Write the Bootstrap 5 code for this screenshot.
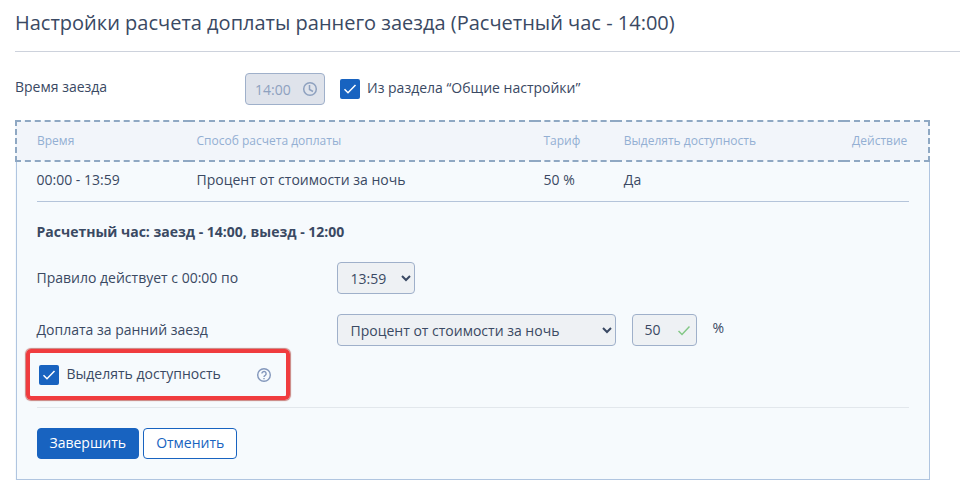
<!DOCTYPE html>
<html lang="ru">
<head>
<meta charset="utf-8">
<meta name="viewport" content="width=device-width, initial-scale=1">
<title>Настройки расчета доплаты</title>
<link href="https://cdn.jsdelivr.net/npm/bootstrap@5.3.0/dist/css/bootstrap.min.css" rel="stylesheet">
<style>
  body { font-family: "Open Sans", "Noto Sans", sans-serif; font-size: 14px; line-height: 20px; color: #3a4963; background: #fff; }
  .page { padding: 9px 7px 12px 15px; }
  .page-title { font-size: 20px; line-height: 28px; font-weight: 400; padding-bottom: 14px; margin-bottom: 21px; border-bottom: 1px solid #cdd2dc; }
  .label-wide { width: 230px; }
  .label-form { width: 300px; }
  .field { height: 32px; border: 1px solid #9fb0ca; border-radius: 4px; background: #eef1f4; color: #3a4963; }
  select.field { padding: 0 0 0 9px; }
  input.field { padding: 0 30px 2px 12px; }
  .field-icon { position: absolute; top: 0; right: 7px; height: 100%; pointer-events: none; }
  .field-time { width: 80px; }
  input.field-time { padding-left: 9px; padding-bottom: 0; }
  .field-time:disabled { background: #dfe3eb; color: #8ea1bf; opacity: 1; }
  .field-hour { width: 78px; }
  .field-method { width: 279px; }
  .field-sum { width: 65px; }
  .tick { appearance: none; width: 20px; height: 20px; margin: 0; border-radius: 2px; background: #1863c0 url("data:image/svg+xml,%3Csvg xmlns='http://www.w3.org/2000/svg' viewBox='0 0 20 20'%3E%3Cpath d='M4.500 10.200l3.500 3.500 7.500-7.700' fill='none' stroke='white' stroke-width='1.500'/%3E%3C/svg%3E") center / 20px; }
  .tick + label { padding-left: 7px; }
  .common { margin-left: 15px; }
  .common + label { padding-bottom: 2px; }
  .rules { border-collapse: collapse; border: 1px solid #b0c5e0; background: #f6fafd; }
  .rules-wrap { margin: 15px 30px 0 0; }
  .rules th { height: 40px; padding: 0 8px; font-size: 12px; font-weight: 400; color: #93afd3; background: #f2f5fa; border: 2px dashed #8fa8c3; border-left: 0; border-right: 0; }
  .rules th:first-child { border-left: 2px dashed #8fa8c3; }
  .rules th:last-child { border-right: 2px dashed #8fa8c3; }
  .rules td { height: 40px; padding: 0 8px 4px; }
  .rules th:first-child, .rules td:first-child { padding-left: 20px; }
  .rules td.editor { padding: 0 20px 20px; }
  .editor-body { border-top: 1px solid #b4c4da; padding-top: 20px; }
  .marked { width: 233px; margin: 18px 0 0 2px; }
  .marked > label { padding-bottom: 2px; }
  .marked > .tick + label { padding-left: 8px; }
  .marked::after { content: ""; position: absolute; inset: -15px -18px -14px -13px; border: 4px solid #f03c3f; border-radius: 5px; box-shadow: 0 0 1px 1px #c9827f; pointer-events: none; }
  .actions { border-top: 1px solid #e2e7ec; margin-top: 21px; padding-top: 20px; }
  .actions .btn { height: 31px; padding: 0 12px 1px; font-size: 14px; line-height: 20px; border-radius: 4px; border-color: #1863c0; }
  .btn-done { background: #1863c0; color: #fff; font-weight: 500; }
  .btn-undo { background: #fff; color: #1863c0; }
</style>
</head>
<body>
<main class="page">
  <h1 class="page-title">Настройки расчета доплаты раннего заезда (Расчетный час - 14:00)</h1>

  <div class="d-flex align-items-center">
    <label class="label-wide pb-1" for="arrival">Время заезда</label>
    <div class="position-relative">
      <input class="field field-time d-block" id="arrival" type="text" value="14:00" disabled>
      <svg class="field-icon" width="16" viewBox="0 0 16 32" fill="none" stroke="#8ea1bf" stroke-width="1.500"><circle cx="8" cy="16" r="6.300"/><path d="M7.500 12v4.500l3.500 2"/></svg>
    </div>
    <input class="tick common" id="common" type="checkbox" checked>
    <label for="common">Из раздела “Общие настройки”</label>
  </div>

  <div class="rules-wrap">
    <table class="rules w-100">
      <colgroup><col style="width:18.9%"><col style="width:38%"><col style="width:8.8%"><col style="width:25%"><col style="width:9.3%"></colgroup>
      <thead>
        <tr><th>Время</th><th>Способ расчета доплаты</th><th>Тариф</th><th>Выделять доступность</th><th>Действие</th></tr>
      </thead>
      <tbody>
        <tr><td>00:00 - 13:59</td><td>Процент от стоимости за ночь</td><td>50 %</td><td>Да</td><td></td></tr>
        <tr>
          <td class="editor" colspan="5">
            <form class="editor-body">
              <div class="fw-bold mb-3 pb-1">Расчетный час: заезд - 14:00, выезд - 12:00</div>
              <div class="d-flex align-items-center">
                <label class="label-form" for="until">Правило действует с 00:00 по</label>
                <select class="field field-hour" id="until"><option>13:59</option></select>
              </div>
              <div class="d-flex align-items-center gap-3 mt-1 pt-3">
                <div class="d-flex align-items-center">
                  <label class="label-form" for="method">Доплата за ранний заезд</label>
                  <select class="field field-method" id="method"><option>Процент от стоимости за ночь</option></select>
                </div>
                <div class="position-relative">
                  <input class="field field-sum d-block" id="sum" type="text" value="50">
                  <svg class="field-icon" width="12" viewBox="0 0 12 32" fill="none" stroke="#82c785" stroke-width="1.500"><path d="M.5 17l3.500 3.500 7.500-8"/></svg>
                </div>
                <label class="pb-1" for="sum">%</label>
              </div>
              <div class="marked position-relative d-flex align-items-center">
                <input class="tick" id="highlight" type="checkbox" checked>
                <label class="me-auto" for="highlight">Выделять доступность</label>
                <svg width="16" height="16" viewBox="0 0 16 16" fill="none" stroke="#8397bc" stroke-width="1.400"><circle cx="8" cy="8" r="6.300"/><path d="M5.900 6.600a2.100 2.100 0 1 1 3.300 1.700C8.400 8.800 8 9.100 8 10M8 11v1.300"/></svg>
              </div>
              <div class="actions d-flex gap-1">
                <button class="btn btn-done" type="button">Завершить</button>
                <button class="btn btn-undo" type="button">Отменить</button>
              </div>
            </form>
          </td>
        </tr>
      </tbody>
    </table>
  </div>
</main>
<script src="https://cdn.jsdelivr.net/npm/bootstrap@5.3.0/dist/js/bootstrap.bundle.min.js"></script>
</body>
</html>
